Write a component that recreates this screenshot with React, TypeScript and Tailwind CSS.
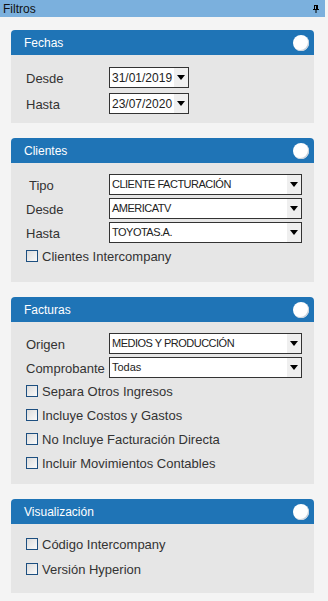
import React from "react";

const font = { fontFamily: '"Liberation Sans", Arial, sans-serif' };

function Header({ title }: { title: string }) {
  return (
    <div className="h-[25px] bg-[#1f74b6] rounded-t-[4px] flex items-center justify-between pl-[13px] pr-[5px]">
      <span className="text-[12px] text-white leading-none">{title}</span>
      <span className="w-[16px] h-[16px] rounded-full bg-white shadow-[inset_-1px_-1px_0_#c8d2dc]" />
    </div>
  );
}

function Select({ value, w, text = "text-[11px] tracking-[-0.5px]" }: { value: string; w: string; text?: string }) {
  return (
    <div className={`${w} h-[21px] border border-[#333] bg-white flex items-stretch`}>
      <span className={`flex-1 pl-[2px] flex items-center ${text} text-[#222] whitespace-nowrap overflow-hidden`}>{value}</span>
      <span className="w-[14px] bg-[#efefef] flex items-center justify-center">
        <span className="w-0 h-0 border-l-[4px] border-r-[4px] border-t-[5px] border-l-transparent border-r-transparent border-t-black" />
      </span>
    </div>
  );
}

function Check({ label }: { label: string }) {
  return (
    <div className="flex items-center h-[12px] gap-[4px]">
      <span className="w-[12px] h-[12px] border border-[#1d4f80] bg-gradient-to-br from-[#dcdcdc] to-[#fafafa]" />
      <span className="text-[13px] text-[#333] leading-none pt-[1px]">{label}</span>
    </div>
  );
}

function Row({ label, children, pl = "pl-[15px]" }: { label: string; children: React.ReactNode; pl?: string }) {
  return (
    <div className={`flex items-center ${pl}`}>
      <span className="w-[83px] text-[13px] text-[#333] leading-none whitespace-nowrap pt-[1px]">{label}</span>
      {children}
    </div>
  );
}

export default function App() {
  return (
    <div className="w-[328px] h-[601px] bg-[#f4f4f4] overflow-hidden" style={font}>
      <div className="flex">
        <div className="w-[325px] h-[17px] bg-[#7bb0dd] flex items-center justify-between pl-[3px] pr-[6px]">
          <span className="text-[12px] text-[#111] leading-none">Filtros</span>
          <svg width="6" height="8" viewBox="0 0 6 8">
            <rect x="1" y="0" width="4" height="1" fill="#000" />
            <rect x="1" y="0" width="1" height="4" fill="#000" />
            <rect x="3" y="0" width="2" height="4" fill="#000" />
            <rect x="0" y="4" width="6" height="1" fill="#000" />
            <rect x="2.5" y="5" width="1" height="3" fill="#000" />
          </svg>
        </div>
      </div>

      <div className="pl-[11px] pr-[14px] pt-[13px] flex flex-col gap-[15px]">
        <section>
          <Header title="Fechas" />
          <div className="bg-[#e6e6e6] h-[68px] pt-[12px] flex flex-col gap-[5px]">
            <Row label="Desde">
              <Select value="31/01/2019" w="w-[80px]" text="text-[12px]" />
            </Row>
            <Row label="Hasta">
              <Select value="23/07/2020" w="w-[80px]" text="text-[12px]" />
            </Row>
          </div>
        </section>

        <section>
          <Header title="Clientes" />
          <div className="bg-[#e6e6e6] h-[119px] pt-[11px] flex flex-col gap-[3px]">
            <Row label="Tipo" pl="pl-[18px]">
              <span className="-ml-[3px]" />
              <Select value="CLIENTE FACTURACIÓN" w="w-[193px]" />
            </Row>
            <Row label="Desde">
              <Select value="AMERICATV" w="w-[193px]" />
            </Row>
            <Row label="Hasta">
              <Select value="TOYOTAS.A." w="w-[193px]" />
            </Row>
            <div className="pl-[15px] pt-[4px]">
              <Check label="Clientes Intercompany" />
            </div>
          </div>
        </section>

        <section>
          <Header title="Facturas" />
          <div className="bg-[#e6e6e6] h-[162px] pt-[11px] flex flex-col">
            <div className="flex flex-col gap-[3px]">
              <Row label="Origen">
                <Select value="MEDIOS Y PRODUCCIÓN" w="w-[193px]" />
              </Row>
              <Row label="Comprobante">
                <Select value="Todas" w="w-[193px]" text="text-[11px]" />
              </Row>
            </div>
            <div className="pl-[15px] pt-[7px] flex flex-col gap-[12px]">
              <Check label="Separa Otros Ingresos" />
              <Check label="Incluye Costos y Gastos" />
              <Check label="No Incluye Facturación Directa" />
              <Check label="Incluir Movimientos Contables" />
            </div>
          </div>
        </section>

        <section>
          <Header title="Visualización" />
          <div className="bg-[#e6e6e6] h-[69px] pt-[14px] pl-[15px] flex flex-col gap-[13px]">
            <Check label="Código Intercompany" />
            <Check label="Versión Hyperion" />
          </div>
        </section>
      </div>
    </div>
  );
}
